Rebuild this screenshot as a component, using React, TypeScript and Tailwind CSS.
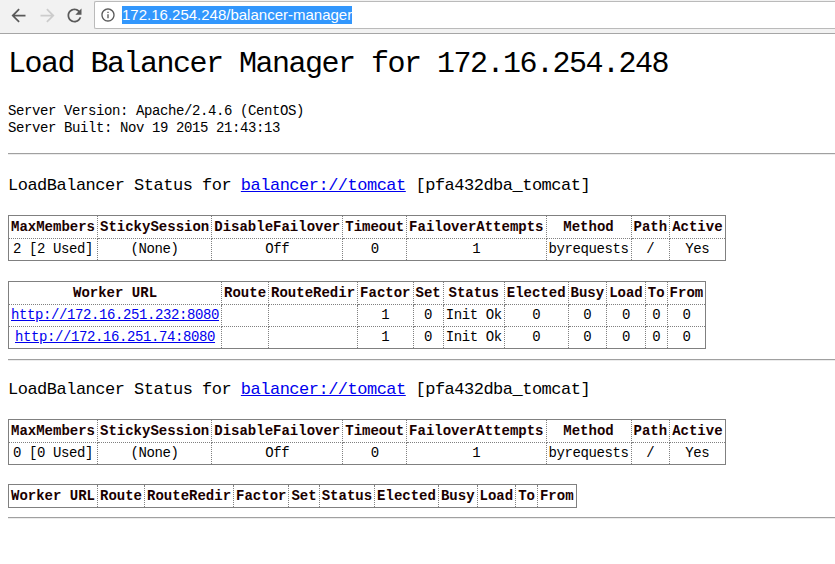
import React from "react";

const thCls = "border border-dotted border-[#808080] p-[2px] leading-[18px] font-bold whitespace-nowrap text-[#1a0000]";
const tdCls = "border border-dotted border-[#808080] p-[2px] leading-[17px] font-normal whitespace-nowrap tracking-[-0.4px]";
const tableCls = "border-collapse border border-solid border-[#808080] bg-white text-center text-[14px]";

function BackIcon() {
    return (
        <svg width="21" height="21" viewBox="0 0 24 24" className="mt-[5px] ml-[8px] fill-[#5a5a5a]">
            <path d="M20 11H7.83l5.59-5.59L12 4l-8 8 8 8 1.41-1.41L7.83 13H20v-2z" />
        </svg>
    );
}

function ForwardIcon() {
    return (
        <svg width="21" height="21" viewBox="0 0 24 24" className="mt-[5px] ml-[8px] fill-[#cccccc]">
            <path d="M12 4l-1.41 1.41L16.17 11H4v2h12.17l-5.58 5.59L12 20l8-8z" />
        </svg>
    );
}

function ReloadIcon() {
    return (
        <svg width="21" height="21" viewBox="0 0 24 24" className="mt-[5px] ml-[6px] fill-[#5a5a5a]">
            <path d="M17.65 6.35C16.2 4.9 14.21 4 12 4c-4.42 0-7.99 3.58-7.99 8s3.57 8 7.99 8c3.73 0 6.84-2.55 7.73-6h-2.08c-.82 2.33-3.04 4-5.65 4-3.31 0-6-2.69-6-6s2.69-6 6-6c1.66 0 3.14.69 4.22 1.78L13 11h7V4l-2.35 2.35z" />
        </svg>
    );
}

function InfoIcon() {
    return (
        <svg width="16" height="16" viewBox="0 0 24 24" className="ml-[5px] fill-[#5a5a5a]">
            <path d="M11 7h2v2h-2zm0 4h2v6h-2zm1-9C6.48 2 2 6.48 2 12s4.48 10 10 10 10-4.48 10-10S17.52 2 12 2zm0 18c-4.41 0-8-3.59-8-8s3.59-8 8-8 8 3.59 8 8-3.59 8-8 8z" />
        </svg>
    );
}

function Toolbar() {
    return (
        <div className="flex h-[34px] items-start border-b border-[#a6a6a6] bg-[#f2f2f2]">
            <BackIcon />
            <ForwardIcon />
            <ReloadIcon />
            <div className="ml-[9px] mt-px flex h-[28px] flex-1 items-center rounded-l-[2px] border border-r-0 border-[#bababa] bg-white">
                <InfoIcon />
                <span className="ml-[6px] h-[18px] bg-[#3297fd] font-['Liberation_Sans',Arial,sans-serif] text-[15px] leading-[18px] text-white">
                    172.16.254.248/balancer-manager
                </span>
            </div>
        </div>
    );
}

function Rule({ className }: { className: string }) {
    return <div className={`h-0 border-t border-b border-t-[#a0a0a0] border-b-[#ececec] ${className}`} />;
}

function Heading({ className }: { className: string }) {
    return (
        <h3 className={`${className} text-[17px] leading-[22px] tracking-[-0.5px] whitespace-nowrap`}>
            LoadBalancer Status for{" "}
            <a href="#" className="text-[#0000ee] underline">
                balancer://tomcat
            </a>{" "}
            [pfa432dba_tomcat]
        </h3>
    );
}

const balancerCols = ["MaxMembers", "StickySession", "DisableFailover", "Timeout", "FailoverAttempts", "Method", "Path", "Active"];
const workerCols = ["Worker URL", "Route", "RouteRedir", "Factor", "Set", "Status", "Elected", "Busy", "Load", "To", "From"];

function BalancerTable({ members }: { members: string }) {
    const row = [members, "(None)", "Off", "0", "1", "byrequests", "/", "Yes"];
    return (
        <table className={`mt-[18px] ${tableCls}`}>
            <tbody>
                <tr>
                    {balancerCols.map((col) => (
                        <th key={col} className={thCls}>
                            {col}
                        </th>
                    ))}
                </tr>
                <tr>
                    {row.map((val, i) => (
                        <td key={i} className={tdCls}>
                            {val}
                        </td>
                    ))}
                </tr>
            </tbody>
        </table>
    );
}

function WorkerTable({ workers, className }: { workers: string[]; className: string }) {
    return (
        <table className={`${className} ${tableCls}`}>
            <tbody>
                <tr>
                    {workerCols.map((col) => (
                        <th key={col} className={thCls}>
                            {col}
                        </th>
                    ))}
                </tr>
                {workers.map((url) => (
                    <tr key={url}>
                        <td className={tdCls}>
                            <a href="#" className="text-[#0000ee] underline">
                                {url}
                            </a>
                        </td>
                        <td className={tdCls}></td>
                        <td className={tdCls}></td>
                        <td className={tdCls}>1</td>
                        <td className={tdCls}>0</td>
                        <td className={tdCls}>Init Ok</td>
                        <td className={tdCls}>0</td>
                        <td className={tdCls}>0</td>
                        <td className={tdCls}>0</td>
                        <td className={tdCls}>0</td>
                        <td className={tdCls}>0</td>
                    </tr>
                ))}
            </tbody>
        </table>
    );
}

export default function App() {
    return (
        <div className="min-h-[564px] w-[835px] overflow-hidden bg-white text-black">
            <Toolbar />
            <div className="pl-2 font-['Liberation_Mono','DejaVu_Sans_Mono',monospace]">
                <h1 className="mt-[14px] text-[30px] leading-[32px] tracking-[-1.5px] whitespace-nowrap">
                    Load Balancer Manager for 172.16.254.248
                </h1>
                <div className="mt-[23px] text-[14px] leading-[17px] tracking-[-0.4px]">
                    <div>Server Version: Apache/2.4.6 (CentOS)</div>
                    <div>Server Built: Nov 19 2015 21:43:13</div>
                </div>
                <Rule className="mt-[16px]" />
                <Heading className="mt-[20px]" />
                <BalancerTable members="2 [2 Used]" />
                <WorkerTable className="mt-[20px]" workers={["http://172.16.251.232:8080", "http://172.16.251.74:8080"]} />
                <Rule className="mt-[10px]" />
                <Heading className="mt-[18px]" />
                <BalancerTable members="0 [0 Used]" />
                <WorkerTable className="mt-[19px]" workers={[]} />
                <Rule className="mt-[9px]" />
            </div>
        </div>
    );
}
